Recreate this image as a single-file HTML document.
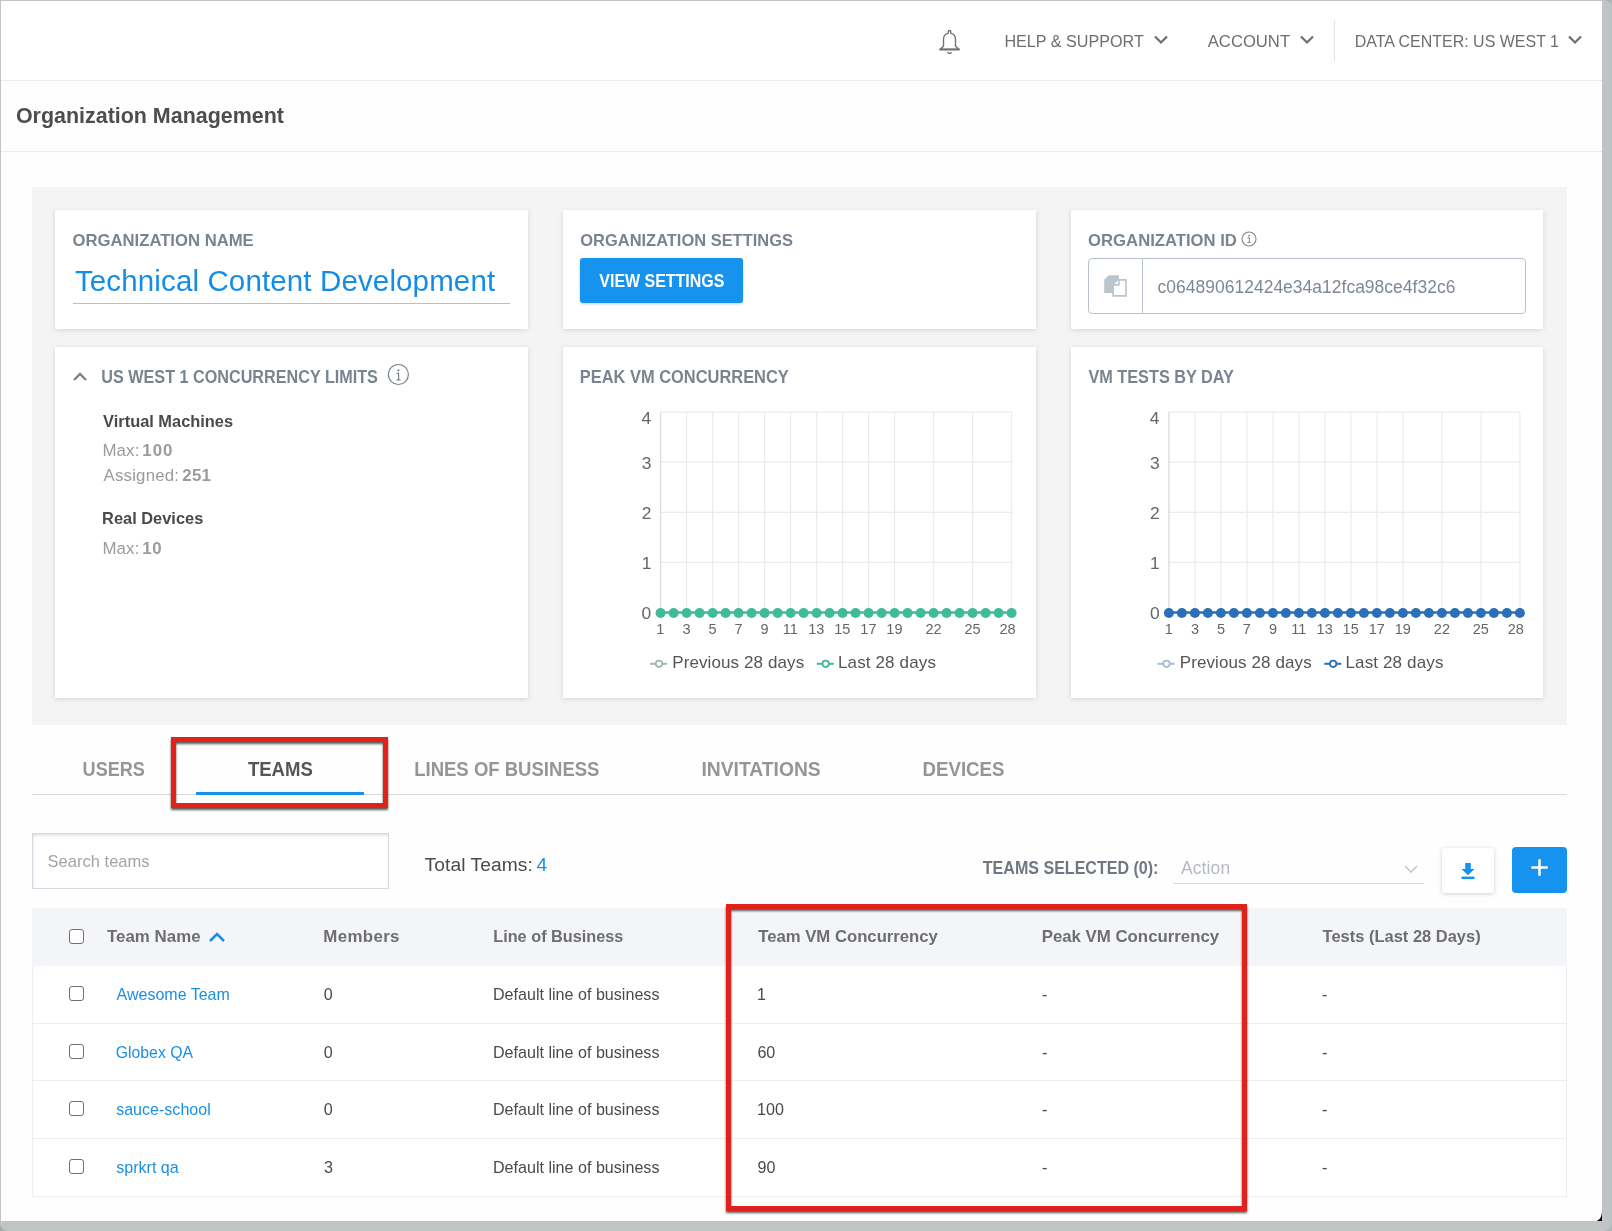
<!DOCTYPE html>
<html><head><meta charset="utf-8">
<style>
html,body{margin:0;padding:0}
body{width:1612px;height:1231px;position:relative;overflow:hidden;background:#fefefe;font-family:"Liberation Sans",sans-serif}
.t{position:absolute;white-space:nowrap;line-height:1}
svg{will-change:transform}
.a{position:absolute;box-sizing:border-box}
.card{position:absolute;background:#fff;box-shadow:0 1px 5px rgba(0,0,0,.13)}
.red{position:absolute;box-sizing:border-box;border:5px solid #e0221b;filter:drop-shadow(0.5px 2.5px 1.2px rgba(60,60,60,.85))}
.cb{position:absolute;box-sizing:border-box;width:15px;height:15px;border:1.5px solid #707070;border-radius:3px;background:#fff}
</style></head><body>
<!-- header -->
<div class="a" style="left:0;top:0;width:1602px;height:81px;background:#fff;border-bottom:1px solid #ebebeb"></div>
<div class="a" style="left:1334px;top:20px;width:1px;height:41px;background:#e3e3e3"></div>
<svg style="position:absolute;left:936px;top:28px" width="28" height="28" viewBox="0 0 28 28">
 <path d="M12.2 5.3 V3.8 Q12.2 2.5 13.5 2.5 Q14.8 2.5 14.8 3.8 V5.3 C17.8 5.8 19.5 8.2 19.5 11.5 V18.3 L23.3 21.5 H3.8 L7.5 18.3 V11.5 C7.5 8.2 9.2 5.8 12.2 5.3 z" fill="none" stroke="#707070" stroke-width="1.35" stroke-linejoin="round"/>
 <path d="M3.8 21.4 H23.3" stroke="#707070" stroke-width="1.9"/>
 <path d="M11.5 24.1 Q13.5 26.9 15.5 24.1" fill="none" stroke="#707070" stroke-width="1.3"/>
</svg>
<svg style="position:absolute;left:1152px;top:33px" width="18" height="14" viewBox="0 0 18 14"><path d="M3 3.5 l6 6 l6 -6" fill="none" stroke="#6e6e6e" stroke-width="2.2"/></svg>
<svg style="position:absolute;left:1298px;top:33px" width="18" height="14" viewBox="0 0 18 14"><path d="M3 3.5 l6 6 l6 -6" fill="none" stroke="#6e6e6e" stroke-width="2.2"/></svg>
<svg style="position:absolute;left:1566px;top:33px" width="18" height="14" viewBox="0 0 18 14"><path d="M3 3.5 l6 6 l6 -6" fill="none" stroke="#6e6e6e" stroke-width="2.2"/></svg>
<!-- title section -->
<div class="a" style="left:0;top:151px;width:1602px;height:1px;background:#ebebeb"></div>
<!-- gray container -->
<div class="a" style="left:32px;top:187px;width:1535px;height:538px;background:#f4f4f4"></div>
<div class="card" style="left:55px;top:210px;width:473px;height:119px"></div>
<div class="card" style="left:563px;top:210px;width:473px;height:119px"></div>
<div class="card" style="left:1071px;top:210px;width:472px;height:119px"></div>
<div class="card" style="left:55px;top:347px;width:473px;height:351px"></div>
<div class="card" style="left:563px;top:347px;width:473px;height:351px"></div>
<div class="card" style="left:1071px;top:347px;width:472px;height:351px"></div>
<!-- org name underline -->
<div class="a" style="left:73px;top:303px;width:437px;height:1px;background:#b7c0ca"></div>
<!-- view settings button -->
<div class="a" style="left:580px;top:258px;width:163px;height:45px;background:#1593ee;border-radius:3px;box-shadow:0 1px 3px rgba(0,0,0,.2)"></div>
<!-- org id input -->
<div class="a" style="left:1088px;top:258px;width:438px;height:56px;border:1px solid #b9c2cc;border-radius:4px;background:#fff"></div>
<div class="a" style="left:1142px;top:258px;width:1px;height:56px;background:#b9c2cc"></div>
<svg style="position:absolute;left:1100px;top:272px" width="32" height="28" viewBox="0 0 32 28">
 <path d="M4.2 7.7 L8.7 3.2 H18.9 V20.9 H4.2 z" fill="#bcc4cc"/>
 <path d="M13.15 23.95 V12.9 H18.9 V7.95 H25.95 V23.95 z" fill="#fff" stroke="#bcc4cc" stroke-width="1.7" stroke-linejoin="round"/>
 <path d="M14.6 12.1 L18.1 8.6 V12.1 z" fill="#fff"/>
</svg>
<!-- info icon org id -->
<svg style="position:absolute;left:1240px;top:230px" width="18" height="18" viewBox="0 0 18 18">
 <circle cx="9" cy="9" r="7" fill="none" stroke="#7a8490" stroke-width="1.1"/>
 <circle cx="9" cy="5.6" r="0.9" fill="#7a8490"/><path d="M7.6 7.7 H9.4 V12.3 M7.5 12.4 H10.6" fill="none" stroke="#7a8490" stroke-width="1"/>
</svg>
<!-- concurrency chevron & info -->
<svg style="position:absolute;left:70px;top:368px" width="20" height="16" viewBox="0 0 20 16"><path d="M4 12 l6 -6 l6 6" fill="none" stroke="#7a8490" stroke-width="2.4"/></svg>
<svg style="position:absolute;left:386px;top:363px" width="24" height="24" viewBox="0 0 24 24">
 <circle cx="12.4" cy="11.5" r="10" fill="none" stroke="#7a8490" stroke-width="1.2"/>
 <circle cx="12.4" cy="7.3" r="1.1" fill="#7a8490"/><path d="M10.6 10.3 H12.6 V16.6 M10.4 16.8 H14.6" fill="none" stroke="#7a8490" stroke-width="1.2"/>
</svg>
<svg style="position:absolute;left:0;top:0" width="1612" height="1231" font-family="Liberation Sans"><line x1="660.6" y1="562.4" x2="1011.6" y2="562.4" stroke="#ebebeb" stroke-width="1.2"/><line x1="660.6" y1="512.3" x2="1011.6" y2="512.3" stroke="#ebebeb" stroke-width="1.2"/><line x1="660.6" y1="462.2" x2="1011.6" y2="462.2" stroke="#ebebeb" stroke-width="1.2"/><line x1="660.6" y1="412.1" x2="1011.6" y2="412.1" stroke="#ebebeb" stroke-width="1.2"/><line x1="686.6" y1="412.2" x2="686.6" y2="612.5" stroke="#ebebeb" stroke-width="1.2"/><line x1="712.6" y1="412.2" x2="712.6" y2="612.5" stroke="#ebebeb" stroke-width="1.2"/><line x1="738.6" y1="412.2" x2="738.6" y2="612.5" stroke="#ebebeb" stroke-width="1.2"/><line x1="764.6" y1="412.2" x2="764.6" y2="612.5" stroke="#ebebeb" stroke-width="1.2"/><line x1="790.6" y1="412.2" x2="790.6" y2="612.5" stroke="#ebebeb" stroke-width="1.2"/><line x1="816.6" y1="412.2" x2="816.6" y2="612.5" stroke="#ebebeb" stroke-width="1.2"/><line x1="842.6" y1="412.2" x2="842.6" y2="612.5" stroke="#ebebeb" stroke-width="1.2"/><line x1="868.6" y1="412.2" x2="868.6" y2="612.5" stroke="#ebebeb" stroke-width="1.2"/><line x1="894.6" y1="412.2" x2="894.6" y2="612.5" stroke="#ebebeb" stroke-width="1.2"/><line x1="933.6" y1="412.2" x2="933.6" y2="612.5" stroke="#ebebeb" stroke-width="1.2"/><line x1="972.6" y1="412.2" x2="972.6" y2="612.5" stroke="#ebebeb" stroke-width="1.2"/><line x1="1011.6" y1="412.2" x2="1011.6" y2="612.5" stroke="#ebebeb" stroke-width="1.2"/><line x1="660.6" y1="412.2" x2="660.6" y2="612.5" stroke="#dcdcdc" stroke-width="1.4"/><line x1="660.6" y1="612.5" x2="1011.6" y2="612.5" stroke="#3fba9b" stroke-width="2.4"/><circle cx="660.6" cy="613.0" r="5" fill="#3fba9b"/><circle cx="673.6" cy="613.0" r="5" fill="#3fba9b"/><circle cx="686.6" cy="613.0" r="5" fill="#3fba9b"/><circle cx="699.6" cy="613.0" r="5" fill="#3fba9b"/><circle cx="712.6" cy="613.0" r="5" fill="#3fba9b"/><circle cx="725.6" cy="613.0" r="5" fill="#3fba9b"/><circle cx="738.6" cy="613.0" r="5" fill="#3fba9b"/><circle cx="751.6" cy="613.0" r="5" fill="#3fba9b"/><circle cx="764.6" cy="613.0" r="5" fill="#3fba9b"/><circle cx="777.6" cy="613.0" r="5" fill="#3fba9b"/><circle cx="790.6" cy="613.0" r="5" fill="#3fba9b"/><circle cx="803.6" cy="613.0" r="5" fill="#3fba9b"/><circle cx="816.6" cy="613.0" r="5" fill="#3fba9b"/><circle cx="829.6" cy="613.0" r="5" fill="#3fba9b"/><circle cx="842.6" cy="613.0" r="5" fill="#3fba9b"/><circle cx="855.6" cy="613.0" r="5" fill="#3fba9b"/><circle cx="868.6" cy="613.0" r="5" fill="#3fba9b"/><circle cx="881.6" cy="613.0" r="5" fill="#3fba9b"/><circle cx="894.6" cy="613.0" r="5" fill="#3fba9b"/><circle cx="907.6" cy="613.0" r="5" fill="#3fba9b"/><circle cx="920.6" cy="613.0" r="5" fill="#3fba9b"/><circle cx="933.6" cy="613.0" r="5" fill="#3fba9b"/><circle cx="946.6" cy="613.0" r="5" fill="#3fba9b"/><circle cx="959.6" cy="613.0" r="5" fill="#3fba9b"/><circle cx="972.6" cy="613.0" r="5" fill="#3fba9b"/><circle cx="985.6" cy="613.0" r="5" fill="#3fba9b"/><circle cx="998.6" cy="613.0" r="5" fill="#3fba9b"/><circle cx="1011.6" cy="613.0" r="5" fill="#3fba9b"/><line x1="650.1" y1="663.8" x2="667.1" y2="663.8" stroke="#a3b5b2" stroke-width="2"/><circle cx="659.0" cy="663.8" r="3.2" fill="#fff" stroke="#a3b5b2" stroke-width="1.8"/><line x1="816.8" y1="663.8" x2="833.8" y2="663.8" stroke="#3fba9b" stroke-width="2"/><circle cx="825.6999999999999" cy="663.8" r="3.2" fill="#fff" stroke="#3fba9b" stroke-width="1.8"/><text x="641.59" y="619" font-size="17.40" fill="#666" style="letter-spacing:0.000px;">0</text>
<text x="641.76" y="569" font-size="17.40" fill="#666" style="letter-spacing:0.000px;">1</text>
<text x="641.80" y="519" font-size="17.40" fill="#666" style="letter-spacing:0.000px;">2</text>
<text x="641.67" y="469" font-size="17.40" fill="#666" style="letter-spacing:0.000px;">3</text>
<text x="641.43" y="424" font-size="17.40" fill="#666" style="letter-spacing:0.000px;">4</text>
<text x="656.37" y="634" font-size="14.50" fill="#666" style="letter-spacing:0.000px;">1</text>
<text x="682.61" y="634" font-size="14.50" fill="#666" style="letter-spacing:0.000px;">3</text>
<text x="708.58" y="634" font-size="14.50" fill="#666" style="letter-spacing:0.000px;">5</text>
<text x="734.56" y="634" font-size="14.50" fill="#666" style="letter-spacing:0.000px;">7</text>
<text x="760.58" y="634" font-size="14.50" fill="#666" style="letter-spacing:0.000px;">9</text>
<text x="782.87" y="634" font-size="14.50" fill="#666" style="letter-spacing:0.000px;">11</text>
<text x="808.30" y="634" font-size="14.50" fill="#666" style="letter-spacing:0.000px;">13</text>
<text x="834.28" y="634" font-size="14.50" fill="#666" style="letter-spacing:0.000px;">15</text>
<text x="860.35" y="634" font-size="14.50" fill="#666" style="letter-spacing:0.000px;">17</text>
<text x="886.33" y="634" font-size="14.50" fill="#666" style="letter-spacing:0.000px;">19</text>
<text x="925.54" y="634" font-size="14.50" fill="#666" style="letter-spacing:0.000px;">22</text>
<text x="964.47" y="634" font-size="14.50" fill="#666" style="letter-spacing:0.000px;">25</text>
<text x="999.49" y="634" font-size="14.50" fill="#666" style="letter-spacing:0.000px;">28</text>
<text x="672.21" y="668" font-size="17.01" fill="#555" style="letter-spacing:0.104px;">Previous 28 days</text>
<text x="838.01" y="668" font-size="17.01" fill="#555" style="letter-spacing:0.135px;">Last 28 days</text>
</svg>
<svg style="position:absolute;left:0;top:0" width="1612" height="1231" font-family="Liberation Sans"><line x1="1168.9" y1="562.4" x2="1519.9" y2="562.4" stroke="#ebebeb" stroke-width="1.2"/><line x1="1168.9" y1="512.3" x2="1519.9" y2="512.3" stroke="#ebebeb" stroke-width="1.2"/><line x1="1168.9" y1="462.2" x2="1519.9" y2="462.2" stroke="#ebebeb" stroke-width="1.2"/><line x1="1168.9" y1="412.1" x2="1519.9" y2="412.1" stroke="#ebebeb" stroke-width="1.2"/><line x1="1194.9" y1="412.2" x2="1194.9" y2="612.5" stroke="#ebebeb" stroke-width="1.2"/><line x1="1220.9" y1="412.2" x2="1220.9" y2="612.5" stroke="#ebebeb" stroke-width="1.2"/><line x1="1246.9" y1="412.2" x2="1246.9" y2="612.5" stroke="#ebebeb" stroke-width="1.2"/><line x1="1272.9" y1="412.2" x2="1272.9" y2="612.5" stroke="#ebebeb" stroke-width="1.2"/><line x1="1298.9" y1="412.2" x2="1298.9" y2="612.5" stroke="#ebebeb" stroke-width="1.2"/><line x1="1324.9" y1="412.2" x2="1324.9" y2="612.5" stroke="#ebebeb" stroke-width="1.2"/><line x1="1350.9" y1="412.2" x2="1350.9" y2="612.5" stroke="#ebebeb" stroke-width="1.2"/><line x1="1376.9" y1="412.2" x2="1376.9" y2="612.5" stroke="#ebebeb" stroke-width="1.2"/><line x1="1402.9" y1="412.2" x2="1402.9" y2="612.5" stroke="#ebebeb" stroke-width="1.2"/><line x1="1441.9" y1="412.2" x2="1441.9" y2="612.5" stroke="#ebebeb" stroke-width="1.2"/><line x1="1480.9" y1="412.2" x2="1480.9" y2="612.5" stroke="#ebebeb" stroke-width="1.2"/><line x1="1519.9" y1="412.2" x2="1519.9" y2="612.5" stroke="#ebebeb" stroke-width="1.2"/><line x1="1168.9" y1="412.2" x2="1168.9" y2="612.5" stroke="#dcdcdc" stroke-width="1.4"/><line x1="1168.9" y1="612.5" x2="1519.9" y2="612.5" stroke="#2b70b6" stroke-width="2.4"/><circle cx="1168.9" cy="613.0" r="5" fill="#2b70b6"/><circle cx="1181.9" cy="613.0" r="5" fill="#2b70b6"/><circle cx="1194.9" cy="613.0" r="5" fill="#2b70b6"/><circle cx="1207.9" cy="613.0" r="5" fill="#2b70b6"/><circle cx="1220.9" cy="613.0" r="5" fill="#2b70b6"/><circle cx="1233.9" cy="613.0" r="5" fill="#2b70b6"/><circle cx="1246.9" cy="613.0" r="5" fill="#2b70b6"/><circle cx="1259.9" cy="613.0" r="5" fill="#2b70b6"/><circle cx="1272.9" cy="613.0" r="5" fill="#2b70b6"/><circle cx="1285.9" cy="613.0" r="5" fill="#2b70b6"/><circle cx="1298.9" cy="613.0" r="5" fill="#2b70b6"/><circle cx="1311.9" cy="613.0" r="5" fill="#2b70b6"/><circle cx="1324.9" cy="613.0" r="5" fill="#2b70b6"/><circle cx="1337.9" cy="613.0" r="5" fill="#2b70b6"/><circle cx="1350.9" cy="613.0" r="5" fill="#2b70b6"/><circle cx="1363.9" cy="613.0" r="5" fill="#2b70b6"/><circle cx="1376.9" cy="613.0" r="5" fill="#2b70b6"/><circle cx="1389.9" cy="613.0" r="5" fill="#2b70b6"/><circle cx="1402.9" cy="613.0" r="5" fill="#2b70b6"/><circle cx="1415.9" cy="613.0" r="5" fill="#2b70b6"/><circle cx="1428.9" cy="613.0" r="5" fill="#2b70b6"/><circle cx="1441.9" cy="613.0" r="5" fill="#2b70b6"/><circle cx="1454.9" cy="613.0" r="5" fill="#2b70b6"/><circle cx="1467.9" cy="613.0" r="5" fill="#2b70b6"/><circle cx="1480.9" cy="613.0" r="5" fill="#2b70b6"/><circle cx="1493.9" cy="613.0" r="5" fill="#2b70b6"/><circle cx="1506.9" cy="613.0" r="5" fill="#2b70b6"/><circle cx="1519.9" cy="613.0" r="5" fill="#2b70b6"/><line x1="1157.6" y1="663.8" x2="1174.6" y2="663.8" stroke="#a9bcd0" stroke-width="2"/><circle cx="1166.5" cy="663.8" r="3.2" fill="#fff" stroke="#a9bcd0" stroke-width="1.8"/><line x1="1324.3" y1="663.8" x2="1341.3" y2="663.8" stroke="#2b70b6" stroke-width="2"/><circle cx="1333.2" cy="663.8" r="3.2" fill="#fff" stroke="#2b70b6" stroke-width="1.8"/><text x="1149.89" y="619" font-size="17.40" fill="#666" style="letter-spacing:0.000px;">0</text>
<text x="1150.06" y="569" font-size="17.40" fill="#666" style="letter-spacing:0.000px;">1</text>
<text x="1150.10" y="519" font-size="17.40" fill="#666" style="letter-spacing:0.000px;">2</text>
<text x="1149.97" y="469" font-size="17.40" fill="#666" style="letter-spacing:0.000px;">3</text>
<text x="1149.73" y="424" font-size="17.40" fill="#666" style="letter-spacing:0.000px;">4</text>
<text x="1164.67" y="634" font-size="14.50" fill="#666" style="letter-spacing:0.000px;">1</text>
<text x="1190.91" y="634" font-size="14.50" fill="#666" style="letter-spacing:0.000px;">3</text>
<text x="1216.88" y="634" font-size="14.50" fill="#666" style="letter-spacing:0.000px;">5</text>
<text x="1242.86" y="634" font-size="14.50" fill="#666" style="letter-spacing:0.000px;">7</text>
<text x="1268.88" y="634" font-size="14.50" fill="#666" style="letter-spacing:0.000px;">9</text>
<text x="1291.17" y="634" font-size="14.50" fill="#666" style="letter-spacing:0.000px;">11</text>
<text x="1316.60" y="634" font-size="14.50" fill="#666" style="letter-spacing:0.000px;">13</text>
<text x="1342.58" y="634" font-size="14.50" fill="#666" style="letter-spacing:0.000px;">15</text>
<text x="1368.65" y="634" font-size="14.50" fill="#666" style="letter-spacing:0.000px;">17</text>
<text x="1394.63" y="634" font-size="14.50" fill="#666" style="letter-spacing:0.000px;">19</text>
<text x="1433.84" y="634" font-size="14.50" fill="#666" style="letter-spacing:0.000px;">22</text>
<text x="1472.77" y="634" font-size="14.50" fill="#666" style="letter-spacing:0.000px;">25</text>
<text x="1507.79" y="634" font-size="14.50" fill="#666" style="letter-spacing:0.000px;">28</text>
<text x="1179.71" y="668" font-size="17.01" fill="#555" style="letter-spacing:0.104px;">Previous 28 days</text>
<text x="1345.51" y="668" font-size="17.01" fill="#555" style="letter-spacing:0.135px;">Last 28 days</text>
</svg>

<!-- tabs -->
<div class="a" style="left:32px;top:794px;width:1535px;height:1px;background:#d9d9d9"></div>
<div class="a" style="left:196px;top:792px;width:168px;height:3px;background:#1593ee"></div>
<!-- search -->
<div class="a" style="left:32px;top:833px;width:357px;height:56px;border:1px solid #d3d9e0;background:#fff;box-shadow:inset 0 2px 2px rgba(0,0,0,.09), inset 2px 0 2px rgba(0,0,0,.03)"></div>
<!-- action select -->
<div class="a" style="left:1174px;top:883px;width:250px;height:1px;background:#d5d9de"></div>
<svg style="position:absolute;left:1402px;top:862px" width="18" height="14" viewBox="0 0 18 14"><path d="M3 4 l6 6 l6 -6" fill="none" stroke="#c4c9ce" stroke-width="1.6"/></svg>
<!-- download button -->
<div class="a" style="left:1442px;top:848px;width:52px;height:45px;background:#fff;border-radius:3px;box-shadow:0 1px 4px rgba(0,0,0,.18)"></div>
<svg style="position:absolute;left:1458px;top:860px" width="20" height="22" viewBox="0 0 20 22">
 <path d="M7.2 3 H12.8 V9 H16.5 L10 15.3 L3.5 9 H7.2 z" fill="#1593ee"/>
 <rect x="3.5" y="16.6" width="13" height="2.4" fill="#1593ee"/>
</svg>
<!-- plus button -->
<div class="a" style="left:1512px;top:847px;width:55px;height:46px;background:#1593ee;border-radius:4px"></div>
<svg style="position:absolute;left:1527px;top:856px" width="26" height="24" viewBox="0 0 26 24">
 <path d="M12.5 4.3 V18.7 M5.3 11.5 H19.7" stroke="#fff" stroke-width="2.5" stroke-linecap="round"/>
</svg>
<!-- table -->
<div class="a" style="left:32px;top:908px;width:1535px;height:289px;border:1px solid #eceef2;border-top:0;background:#fff"></div>
<div class="a" style="left:32px;top:908px;width:1535px;height:58px;background:#f3f5f8"></div>
<div class="a" style="left:33px;top:1023px;width:1533px;height:1px;background:#eceef2"></div>
<div class="a" style="left:33px;top:1080px;width:1533px;height:1px;background:#eceef2"></div>
<div class="a" style="left:33px;top:1138px;width:1533px;height:1px;background:#eceef2"></div>
<div class="cb" style="left:69px;top:929px"></div>
<div class="cb" style="left:69px;top:986px"></div>
<div class="cb" style="left:69px;top:1044px"></div>
<div class="cb" style="left:69px;top:1101px"></div>
<div class="cb" style="left:69px;top:1159px"></div>
<svg style="position:absolute;left:206px;top:928px" width="22" height="18" viewBox="0 0 22 18"><path d="M4 13 l7 -7 l7 7" fill="none" stroke="#1b8fe6" stroke-width="2.6"/></svg>
<svg style="position:absolute;left:0;top:0;will-change:transform" width="1612" height="1231" font-family="Liberation Sans"><text transform="translate(1004.38 47) scale(0.9584 1)" font-size="16.86" fill="#6e6e6e">HELP &amp; SUPPORT</text>
<text transform="translate(1207.77 47) scale(0.9873 1)" font-size="16.86" fill="#6e6e6e">ACCOUNT</text>
<text transform="translate(1354.69 47) scale(0.9490 1)" font-size="16.86" fill="#6e6e6e">DATA CENTER: US WEST 1</text>
<text transform="translate(15.92 123) scale(0.9582 1)" font-size="22.38" fill="#4d4d4d" font-weight="bold">Organization Management</text>
<text transform="translate(72.52 246) scale(0.9980 1)" font-size="16.72" fill="#7a8490" font-weight="bold">ORGANIZATION NAME</text>
<text transform="translate(580.33 246) scale(0.9841 1)" font-size="16.72" fill="#7a8490" font-weight="bold">ORGANIZATION SETTINGS</text>
<text transform="translate(1088.12 246) scale(0.9979 1)" font-size="16.72" fill="#7a8490" font-weight="bold">ORGANIZATION ID</text>
<text transform="translate(101.33 383) scale(0.9287 1)" font-size="17.44" fill="#7a8490" font-weight="bold">US WEST 1 CONCURRENCY LIMITS</text>
<text transform="translate(579.71 383) scale(0.9429 1)" font-size="17.44" fill="#7a8490" font-weight="bold">PEAK VM CONCURRENCY</text>
<text transform="translate(1088.40 383) scale(0.9334 1)" font-size="17.44" fill="#7a8490" font-weight="bold">VM TESTS BY DAY</text>
<text x="74.95" y="291" font-size="29.51" fill="#148de8" style="letter-spacing:0.131px;">Technical Content Development</text>
<text transform="translate(599.30 287) scale(0.8941 1)" font-size="17.88" fill="#fff" font-weight="bold">VIEW SETTINGS</text>
<text x="1157.57" y="293" font-size="17.44" fill="#7d8894" style="letter-spacing:0.035px;">c064890612424e34a12fca98ce4f32c6</text>
<text transform="translate(103.10 427) scale(0.9728 1)" font-size="16.86" fill="#4a4a4a" font-weight="bold">Virtual Machines</text>
<text x="102.42" y="456" font-size="16.86" fill="#9b9b9b" style="letter-spacing:0.127px;">Max:</text>
<text x="142.35" y="456" font-size="16.86" fill="#9b9b9b" font-weight="bold" style="letter-spacing:0.998px;">100</text>
<text x="103.57" y="481" font-size="16.86" fill="#9b9b9b" style="letter-spacing:0.177px;">Assigned:</text>
<text x="182.33" y="481" font-size="16.86" fill="#9b9b9b" font-weight="bold" style="letter-spacing:0.203px;">251</text>
<text transform="translate(102.12 524) scale(0.9720 1)" font-size="16.86" fill="#4a4a4a" font-weight="bold">Real Devices</text>
<text x="102.42" y="554" font-size="16.86" fill="#9b9b9b" style="letter-spacing:0.127px;">Max:</text>
<text x="142.35" y="554" font-size="16.86" fill="#9b9b9b" font-weight="bold" style="letter-spacing:0.571px;">10</text>
<text transform="translate(82.62 776) scale(0.8886 1)" font-size="20.35" fill="#959595" font-weight="bold">USERS</text>
<text transform="translate(247.90 776) scale(0.9131 1)" font-size="20.35" fill="#555" font-weight="bold">TEAMS</text>
<text transform="translate(414.18 776) scale(0.9107 1)" font-size="20.35" fill="#959595" font-weight="bold">LINES OF BUSINESS</text>
<text transform="translate(701.43 776) scale(0.9481 1)" font-size="20.35" fill="#959595" font-weight="bold">INVITATIONS</text>
<text transform="translate(922.57 776) scale(0.9175 1)" font-size="20.35" fill="#959595" font-weight="bold">DEVICES</text>
<text transform="translate(47.56 867) scale(0.9982 1)" font-size="16.57" fill="#a4a4a4">Search teams</text>
<text x="424.58" y="871" font-size="19.19" fill="#4a4a4a" style="letter-spacing:0.075px;">Total Teams:</text>
<text x="536.58" y="871" font-size="19.19" fill="#1b8fe6" style="letter-spacing:0.000px;">4</text>
<text transform="translate(982.82 874) scale(0.9205 1)" font-size="17.44" fill="#6f7882" font-weight="bold">TEAMS SELECTED (0):</text>
<text x="1180.97" y="874" font-size="17.44" fill="#b4bac0" style="letter-spacing:0.136px;">Action</text>
<text x="107.01" y="942" font-size="16.86" fill="#6e6e6e" font-weight="bold" style="letter-spacing:0.021px;">Team Name</text>
<text x="323.29" y="942" font-size="16.86" fill="#6e6e6e" font-weight="bold" style="letter-spacing:0.362px;">Members</text>
<text transform="translate(493.23 942) scale(0.9653 1)" font-size="16.86" fill="#6e6e6e" font-weight="bold">Line of Business</text>
<text transform="translate(758.22 942) scale(0.9913 1)" font-size="16.86" fill="#6e6e6e" font-weight="bold">Team VM Concurrency</text>
<text transform="translate(1041.69 942) scale(0.9970 1)" font-size="16.86" fill="#6e6e6e" font-weight="bold">Peak VM Concurrency</text>
<text transform="translate(1322.62 942) scale(0.9776 1)" font-size="16.86" fill="#6e6e6e" font-weight="bold">Tests (Last 28 Days)</text>
<text transform="translate(116.57 1000) scale(0.9928 1)" font-size="16.13" fill="#1b8fe6">Awesome Team</text>
<text x="323.87" y="1000" font-size="16.13" fill="#4a4a4a" style="letter-spacing:0.000px;">0</text>
<text transform="translate(492.98 1000) scale(0.9988 1)" font-size="16.13" fill="#4a4a4a">Default line of business</text>
<text x="756.97" y="1000" font-size="16.13" fill="#4a4a4a" style="letter-spacing:0.000px;">1</text>
<text x="1042.09" y="1000" font-size="16.13" fill="#4a4a4a" style="letter-spacing:0.000px;">-</text>
<text x="1322.09" y="1000" font-size="16.13" fill="#4a4a4a" style="letter-spacing:0.000px;">-</text>
<text transform="translate(115.81 1058) scale(0.9786 1)" font-size="16.13" fill="#1b8fe6">Globex QA</text>
<text x="323.87" y="1058" font-size="16.13" fill="#4a4a4a" style="letter-spacing:0.000px;">0</text>
<text transform="translate(492.98 1058) scale(0.9988 1)" font-size="16.13" fill="#4a4a4a">Default line of business</text>
<text x="757.39" y="1058" font-size="16.13" fill="#4a4a4a" style="letter-spacing:0.000px;">60</text>
<text x="1042.09" y="1058" font-size="16.13" fill="#4a4a4a" style="letter-spacing:0.000px;">-</text>
<text x="1322.09" y="1058" font-size="16.13" fill="#4a4a4a" style="letter-spacing:0.000px;">-</text>
<text transform="translate(116.17 1115) scale(0.9962 1)" font-size="16.13" fill="#1b8fe6">sauce-school</text>
<text x="323.87" y="1115" font-size="16.13" fill="#4a4a4a" style="letter-spacing:0.000px;">0</text>
<text transform="translate(492.98 1115) scale(0.9988 1)" font-size="16.13" fill="#4a4a4a">Default line of business</text>
<text x="756.97" y="1115" font-size="16.13" fill="#4a4a4a" style="letter-spacing:0.000px;">100</text>
<text x="1042.09" y="1115" font-size="16.13" fill="#4a4a4a" style="letter-spacing:0.000px;">-</text>
<text x="1322.09" y="1115" font-size="16.13" fill="#4a4a4a" style="letter-spacing:0.000px;">-</text>
<text transform="translate(116.17 1173) scale(0.9977 1)" font-size="16.13" fill="#1b8fe6">sprkrt qa</text>
<text x="323.89" y="1173" font-size="16.13" fill="#4a4a4a" style="letter-spacing:0.000px;">3</text>
<text transform="translate(492.98 1173) scale(0.9988 1)" font-size="16.13" fill="#4a4a4a">Default line of business</text>
<text x="757.46" y="1173" font-size="16.13" fill="#4a4a4a" style="letter-spacing:0.000px;">90</text>
<text x="1042.09" y="1173" font-size="16.13" fill="#4a4a4a" style="letter-spacing:0.000px;">-</text>
<text x="1322.09" y="1173" font-size="16.13" fill="#4a4a4a" style="letter-spacing:0.000px;">-</text>
</svg>
<!-- red highlight boxes -->
<div class="red" style="left:171px;top:737px;width:217px;height:71px"></div>
<div class="red" style="left:726px;top:904px;width:521px;height:307px"></div>
<!-- window frame -->
<div class="a" style="left:0;top:0;width:1612px;height:1px;background:#bfc5c5"></div>
<div class="a" style="left:0;top:0;width:1px;height:1231px;background:#bfc5c5"></div>
<div class="a" style="left:1602px;top:0;width:10px;height:1231px;background:#bfc5c5"></div>
<div class="a" style="left:0;top:1221px;width:1612px;height:10px;background:#bfc5c5"></div>
<svg style="position:absolute;left:0;top:0" width="1612" height="1231">
 <path d="M1604 0 H1612 V8 A8 8 0 0 0 1604 0 z" fill="#a9a9a9"/>
 <path d="M1612 1223 V1231 H1604 A8 8 0 0 0 1612 1223 z" fill="#a9a9a9"/>
 <path d="M0 1223 V1231 H8 A8 8 0 0 1 0 1223 z" fill="#a9a9a9"/>
 <path d="M1602 1211.5 V1221 H1596.5 Q1601.6 1219.5 1602 1211.5 z" fill="#000"/>
 <rect x="1609" y="0" width="3" height="1231" fill="#b4c2c2" opacity="0.6"/>
</svg>
</body></html>
